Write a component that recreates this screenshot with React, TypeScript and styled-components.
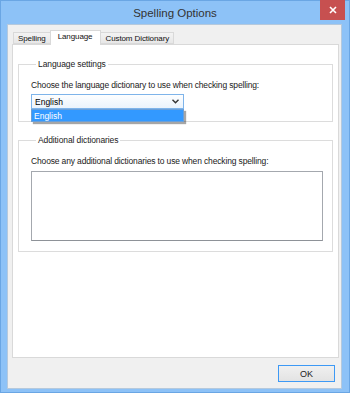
import styled, { createGlobalStyle } from "styled-components";

const GlobalStyle = createGlobalStyle`
  html, body {
    margin: 0;
    padding: 0;
    background: #fff;
  }
  body {
    font-family: "Liberation Sans", Arial, sans-serif;
    font-size: 8.5px;
    color: #000;
  }
`;

const Window = styled.div`
  width: 350px;
  height: 393px;
  box-sizing: border-box;
  background: #8dc2f7;
  border: 1px solid #6aa6e4;
  display: flex;
  flex-direction: column;
`;

const TitleBar = styled.div`
  height: 23px;
  position: relative;
  display: flex;
  align-items: center;
  justify-content: center;
  font-size: 11.5px;
  color: #333;
`;

const CloseButton = styled.div`
  position: absolute;
  top: -1px;
  right: 4px;
  width: 25px;
  height: 20px;
  background: #c75050;
  display: flex;
  align-items: center;
  justify-content: center;
`;

const Client = styled.div`
  flex: 1;
  margin: 0 7px 3px 6px;
  background: #f0f0f0;
  border: 1px solid #b5c9dd;
  display: flex;
  flex-direction: column;
  padding: 5px 2px 0 4px;
`;

const TabStrip = styled.div`
  display: flex;
  align-items: flex-end;
  height: 14px;
  padding-left: 1px;
  position: relative;
  z-index: 1;
`;

const Tab = styled.div<{ $active?: boolean }>`
  box-sizing: border-box;
  height: ${(p) => (p.$active ? "15px" : "12px")};
  padding: ${(p) => (p.$active ? "1px 8px 0 7px" : "0 4px")};
  margin-bottom: ${(p) => (p.$active ? "-1px" : "0")};
  margin-left: ${(p) => (p.$active ? "-1px" : "0")};
  margin-right: ${(p) => (p.$active ? "-1px" : "0")};
  border: 1px solid #d9d9d9;
  border-bottom: ${(p) => (p.$active ? "none" : "1px solid #d9d9d9")};
  background: ${(p) => (p.$active ? "#fff" : "linear-gradient(#f3f3f3, #e7e7e7)")};
  display: flex;
  align-items: ${(p) => (p.$active ? "flex-start" : "center")};
  white-space: nowrap;
  font-size: 8px;
  letter-spacing: -0.1px;
  color: #111;
`;

const Panel = styled.div`
  box-sizing: border-box;
  height: 314px;
  background: #fff;
  border: 1px solid #d9d9d9;
  padding: 14px 5px 0 5px;
  display: flex;
  flex-direction: column;
  gap: 13px;
`;

const Group = styled.fieldset<{ $height: number }>`
  position: relative;
  box-sizing: border-box;
  margin: 0;
  height: ${(p) => p.$height}px;
  border: 1px solid #dcdcdc;
  padding: 11px 9px 0 12px;
  display: flex;
  flex-direction: column;
`;

const Legend = styled.legend`
  padding: 0 2px;
  margin-left: 5px;
  font-size: 8.5px;
  letter-spacing: -0.1px;
  color: #222;
`;

const Prompt = styled.div`
  font-size: 8.5px;
  letter-spacing: -0.15px;
  color: #1a1a1a;
  line-height: 11px;
  white-space: nowrap;
`;

const Combo = styled.div`
  position: relative;
  margin-top: 3px;
  width: 153px;
  height: 15px;
  box-sizing: border-box;
  border: 1px solid #7eb4ea;
  background: linear-gradient(#fdfeff, #eaf3fc);
  display: flex;
  align-items: center;
  padding: 0 4px 0 3px;
  justify-content: space-between;
  font-size: 8.5px;
`;

const DropList = styled.div`
  position: absolute;
  top: 14px;
  left: -1px;
  width: 153px;
  height: 13px;
  box-sizing: border-box;
  background: #3399ff;
  border: 1px solid #6a9fd8;
  color: #fff;
  display: flex;
  align-items: center;
  padding-left: 2px;
  box-shadow: 2px 2px 1px rgba(0, 0, 0, 0.35);
  font-size: 8.5px;
`;

const ListBox = styled.div`
  margin-top: 4px;
  width: 292px;
  height: 70px;
  box-sizing: border-box;
  border: 1px solid #a4a8ae;
  border-bottom-color: #8e9298;
  background: #fff;
`;

const Footer = styled.div`
  flex: 1;
  display: flex;
  justify-content: flex-end;
  align-items: flex-start;
  padding: 7px 4px 0 0;
`;

const OkButton = styled.button`
  width: 57px;
  height: 17px;
  box-sizing: border-box;
  border: 1px solid #3d99f5;
  background: linear-gradient(#f0f0f0, #e3e3e3);
  font-family: "Liberation Sans", Arial, sans-serif;
  font-size: 9px;
  color: #222;
  padding: 0;
  border-radius: 0;
`;

function Chevron() {
  return (
    <svg width="7" height="5" viewBox="0 0 7 5">
      <path d="M0.5 0.8 L3.5 3.8 L6.5 0.8" fill="none" stroke="#333" strokeWidth="1.4" />
    </svg>
  );
}

export default function App() {
  return (
    <>
      <GlobalStyle />
      <Window>
        <TitleBar>
          Spelling Options
          <CloseButton>
            <svg width="8" height="8" viewBox="0 0 8 8">
              <path d="M1 1 L7 7 M7 1 L1 7" stroke="#fff" strokeWidth="1.6" />
            </svg>
          </CloseButton>
        </TitleBar>
        <Client>
          <TabStrip>
            <Tab>Spelling</Tab>
            <Tab $active>Language</Tab>
            <Tab>Custom Dictionary</Tab>
          </TabStrip>
          <Panel>
            <Group $height={63}>
              <Legend>Language settings</Legend>
              <Prompt>Choose the language dictionary to use when checking spelling:</Prompt>
              <Combo>
                English
                <Chevron />
                <DropList>English</DropList>
              </Combo>
            </Group>
            <Group $height={117}>
              <Legend>Additional dictionaries</Legend>
              <Prompt>Choose any additional dictionaries to use when checking spelling:</Prompt>
              <ListBox />
            </Group>
          </Panel>
          <Footer>
            <OkButton>OK</OkButton>
          </Footer>
        </Client>
      </Window>
    </>
  );
}
